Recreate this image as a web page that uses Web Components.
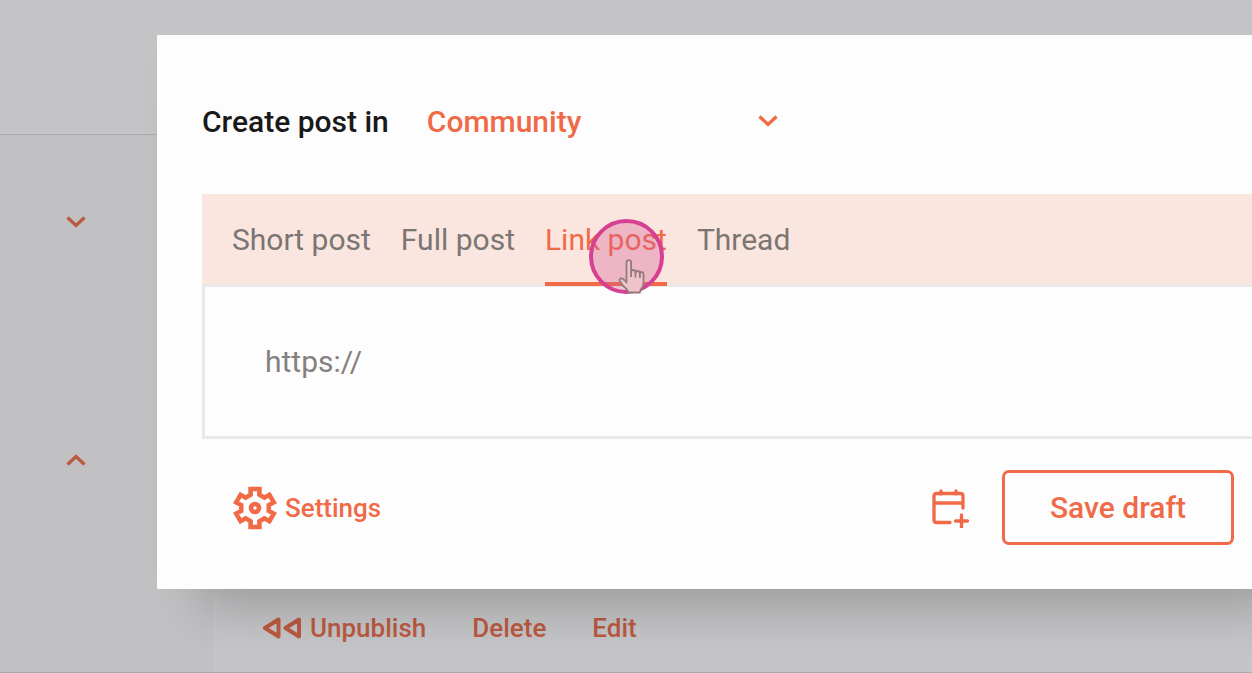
<!DOCTYPE html>
<html lang="en">
<head>
<meta charset="utf-8">
<meta name="viewport" content="width=device-width, initial-scale=1">
<title>Create post</title>
<style>
    body {
        margin: 0;
        overflow: hidden;
        background: #c1c1c3;
        font-family: Roboto, "Liberation Sans", sans-serif;
        --accent: #f06a48;
        --accent-dim: #bb5a42;
    }
</style>
</head>
<body>
<app-page>
    <icon-button slot="aside" icon="down" label="Expand section"></icon-button>
    <icon-button slot="aside" icon="up" label="Collapse section"></icon-button>
    <post-action slot="actions" icon="rewind">Unpublish</post-action>
    <post-action slot="actions">Delete</post-action>
    <post-action slot="actions">Edit</post-action>
</app-page>

<post-dialog>
    <channel-select slot="header" label="Create post in" value="Community"></channel-select>
    <post-tabs slot="tabs">
        <post-tab>Short post</post-tab>
        <post-tab>Full post</post-tab>
        <post-tab active>Link post<click-pointer slot="pointer"></click-pointer></post-tab>
        <post-tab>Thread</post-tab>
    </post-tabs>
    <link-field placeholder="https://"></link-field>
    <post-action slot="footer" icon="gear">Settings</post-action>
    <icon-button slot="footer" icon="calendar" label="Schedule"></icon-button>
    <outline-button slot="footer">Save draft</outline-button>
</post-dialog>

<script>
const icons = {
    down: `<svg width="20" height="12" viewBox="0 0 20 12" fill="none" stroke="currentColor" stroke-width="3.300"><path d="M1.500 1.500 10 9.500l8.500-8"/></svg>`,
    up: `<svg width="20" height="12" viewBox="0 0 20 12" fill="none" stroke="currentColor" stroke-width="3.300"><path d="M1.500 10.500 10 2.500l8.500 8"/></svg>`,
    rewind: `<svg width="38" height="22" viewBox="0 0 38 22" fill="none" stroke="currentColor" stroke-width="4" stroke-linejoin="round"><path d="M15.500 2.500v17L2 11zM36 2.500v17L22.500 11z"/></svg>`,
    gear: `<svg width="44" height="44" viewBox="0 0 44 44" fill="none" stroke="currentColor" stroke-width="4.600"><path d="M17.600 3h8.800v5.800l5 2.900 5-2.900 4.400 7.600-5 2.700v5.800l5 2.700-4.400 7.600-5-2.900-5 2.900V41h-8.800v-5.800l-5-2.900-5 2.900-4.400-7.600 5-2.700v-5.800l-5-2.700 4.400-7.600 5 2.900 5-2.900z"/><circle cx="22" cy="22" r="4"/></svg>`,
    calendar: `<svg width="38" height="40" viewBox="0 0 38 40" fill="none" stroke="currentColor" stroke-width="3.300" stroke-linecap="round" stroke-linejoin="round"><path d="M31 20V8q0-2.500-2.500-2.500h-24Q2 5.500 2 8v24q0 2.500 2.500 2.500H18M2 15h29M9 3v3M24 3v3M29.500 27v12M23.500 33h12"/></svg>`
}

class AppPage extends HTMLElement {

    constructor() {
        super()

        this.attachShadow({ mode: 'open' }).innerHTML = `
            <style>
                :host {
                    display: flex;
                    flex-direction: column;
                    min-height: 100vh;
                    color: var(--accent-dim);
                }
                header {
                    height: 134px;
                    background: #c4c4c6;
                    border-bottom: 1px solid #aaaaac;
                }
                .body {
                    flex: 1;
                    display: flex;
                    border-bottom: 1px solid #aaaaac;
                }
                aside {
                    box-sizing: border-box;
                    width: 213px;
                    padding: 67px 0 0 56px;
                    display: flex;
                    flex-direction: column;
                    align-items: flex-start;
                    gap: 198px;
                }
                main {
                    flex: 1;
                    display: flex;
                    flex-direction: column;
                    justify-content: flex-end;
                    background: #c5c5c7;
                }
                .actions {
                    display: flex;
                    align-items: center;
                    gap: 46px;
                    padding: 0 50px 25px;
                }
            </style>
            <header></header>
            <div class="body">
                <aside><slot name="aside"></slot></aside>
                <main>
                    <div class="actions"><slot name="actions"></slot></div>
                </main>
            </div>
        `
    }

}

class PostDialog extends HTMLElement {

    constructor() {
        super()

        this.attachShadow({ mode: 'open' }).innerHTML = `
            <style>
                :host {
                    display: block;
                    position: absolute;
                    top: 35px;
                    left: 157px;
                    right: 0;
                    box-sizing: border-box;
                    padding: 50px 0 44px 45px;
                    background: #fdfdfd;
                    box-shadow: 36px 30px 44px -8px rgba(0, 0, 0, .19), 0 0 24px rgba(0, 0, 0, .02);
                    clip-path: inset(0 0 -90px -60px);
                }
                .panel {
                    margin-top: 37px;
                }
                .content {
                    border: 3px solid #e8e8e8;
                    border-width: 0 0 3px 3px;
                }
                footer {
                    display: flex;
                    align-items: center;
                    padding: 31px 18px 0 31px;
                }
                ::slotted(icon-button) {
                    margin-left: auto;
                    margin-right: 22px;
                }
            </style>
            <slot name="header"></slot>
            <div class="panel">
                <slot name="tabs"></slot>
                <div class="content"><slot></slot></div>
            </div>
            <footer><slot name="footer"></slot></footer>
        `
    }

    connectedCallback() {
        this.setAttribute('role', 'dialog')
        this.setAttribute('aria-label', 'Create post')
    }

}

class ChannelSelect extends HTMLElement {

    connectedCallback() {
        this.attachShadow({ mode: 'open' }).innerHTML = `
            <style>
                :host {
                    display: flex;
                    align-items: center;
                    gap: 38px;
                    height: 72px;
                    font-size: 30px;
                    font-weight: 500;
                }
                label {
                    color: #191919;
                }
                .field {
                    display: grid;
                    grid-template-columns: 331px 20px;
                    align-items: center;
                    color: var(--accent);
                }
                select {
                    grid-area: 1 / 1 / 2 / 3;
                    appearance: none;
                    border: 0;
                    padding: 0;
                    background: none;
                    color: inherit;
                    font: inherit;
                }
                svg {
                    grid-area: 1 / 2;
                    pointer-events: none;
                }
            </style>
            <label for="channel">${this.getAttribute('label')}</label>
            <div class="field">
                <select id="channel"><option>${this.getAttribute('value')}</option></select>
                ${icons.down}
            </div>
        `
    }

}

class PostTabs extends HTMLElement {

    constructor() {
        super()

        this.attachShadow({ mode: 'open' }).innerHTML = `
            <style>
                :host {
                    display: flex;
                    gap: 30px;
                    padding-left: 30px;
                    background: #fae6df;
                    border-bottom: 3px solid #e8e8e8;
                }
            </style>
            <slot></slot>
        `
    }

    connectedCallback() {
        this.setAttribute('role', 'tablist')
    }

}

class PostTab extends HTMLElement {

    connectedCallback() {
        this.attachShadow({ mode: 'open' }).innerHTML = `
            <style>
                :host {
                    display: block;
                    position: relative;
                    margin-bottom: -2px;
                }
                button {
                    display: block;
                    height: 92px;
                    padding: 3px 0 0;
                    border: 0;
                    border-bottom: 4px solid transparent;
                    background: none;
                    color: #7b7574;
                    font: 30px/36px Roboto, "Liberation Sans", sans-serif;
                    cursor: pointer;
                }
                :host([active]) button {
                    color: var(--accent);
                    border-color: var(--accent);
                }
            </style>
            <button role="tab" aria-selected="${this.hasAttribute('active')}"><slot></slot></button>
            <slot name="pointer"></slot>
        `
    }

}

class ClickPointer extends HTMLElement {

    constructor() {
        super()

        this.attachShadow({ mode: 'open' }).innerHTML = `
            <style>
                :host {
                    display: block;
                    box-sizing: border-box;
                    position: absolute;
                    top: 25px;
                    left: 44px;
                    width: 75px;
                    height: 75px;
                    border: 4px solid #d63f92;
                    border-radius: 50%;
                    background: rgba(214, 90, 147, .34);
                    pointer-events: none;
                }
                svg {
                    display: block;
                    margin: 36px 0 0 25px;
                }
            </style>
            <svg width="30" height="36" viewBox="0 0 30 36" fill="#f0c3cb" stroke="#957b7d" stroke-width="1.800" stroke-linejoin="round">
                <path d="M8.500 22V3.500q0-2.300 2.300-2.300t2.300 2.300V13q0-2 2-2t2.400 2.500q0-1.500 2-1.500t2.400 2.500q0-1.500 1.800-1.500t1.800 3V24q0 4-3 7l-.5 2.500H10.500L8.500 30q-4-3-6-7-2-2.500 0-3.500 2.500-.500 6 4z"/>
                <path d="M13.100 12v6M17.500 13v5.500M21.900 14v5" fill="none"/>
            </svg>
        `
    }

}

class LinkField extends HTMLElement {

    connectedCallback() {
        this.attachShadow({ mode: 'open' }).innerHTML = `
            <style>
                :host {
                    display: block;
                }
                input {
                    display: block;
                    box-sizing: border-box;
                    width: 100%;
                    height: 149px;
                    padding: 0 60px;
                    border: 0;
                    outline: 0;
                    background: none;
                    font: 30px/36px Roboto, "Liberation Sans", sans-serif;
                    color: #7b7574;
                }
                input::placeholder {
                    color: #85807e;
                }
            </style>
            <input type="url" aria-label="Link" placeholder="${this.getAttribute('placeholder')}">
        `
    }

}

class PostAction extends HTMLElement {

    connectedCallback() {
        this.attachShadow({ mode: 'open' }).innerHTML = `
            <style>
                :host {
                    display: block;
                }
                :host([slot="footer"]) {
                    color: var(--accent);
                }
                button {
                    display: flex;
                    align-items: center;
                    gap: 9px;
                    padding: 0;
                    border: 0;
                    background: none;
                    color: inherit;
                    font: 500 26px/38px Roboto, "Liberation Sans", sans-serif;
                    cursor: pointer;
                }
                :host([slot="footer"]) button {
                    gap: 8px;
                }
            </style>
            <button>${icons[this.getAttribute('icon')] || ''}<span><slot></slot></span></button>
        `
    }

}

class IconButton extends HTMLElement {

    connectedCallback() {
        this.attachShadow({ mode: 'open' }).innerHTML = `
            <style>
                :host {
                    display: block;
                }
                :host([slot="footer"]) {
                    color: var(--accent);
                }
                button {
                    display: flex;
                    align-items: center;
                    justify-content: center;
                    min-width: 40px;
                    min-height: 40px;
                    padding: 0 10px;
                    border: 0;
                    background: none;
                    color: inherit;
                    cursor: pointer;
                }
            </style>
            <button aria-label="${this.getAttribute('label')}">${icons[this.getAttribute('icon')]}</button>
        `
    }

}

class OutlineButton extends HTMLElement {

    constructor() {
        super()

        this.attachShadow({ mode: 'open' }).innerHTML = `
            <style>
                :host {
                    display: block;
                }
                button {
                    display: block;
                    height: 75px;
                    padding: 0 45px;
                    border: 3px solid var(--accent);
                    border-radius: 7px;
                    background: none;
                    color: var(--accent);
                    font: 500 30px/36px Roboto, "Liberation Sans", sans-serif;
                    cursor: pointer;
                }
            </style>
            <button><slot></slot></button>
        `
    }

}

customElements.define('app-page', AppPage)
customElements.define('post-dialog', PostDialog)
customElements.define('channel-select', ChannelSelect)
customElements.define('post-tabs', PostTabs)
customElements.define('post-tab', PostTab)
customElements.define('click-pointer', ClickPointer)
customElements.define('link-field', LinkField)
customElements.define('post-action', PostAction)
customElements.define('icon-button', IconButton)
customElements.define('outline-button', OutlineButton)
</script>
</body>
</html>
